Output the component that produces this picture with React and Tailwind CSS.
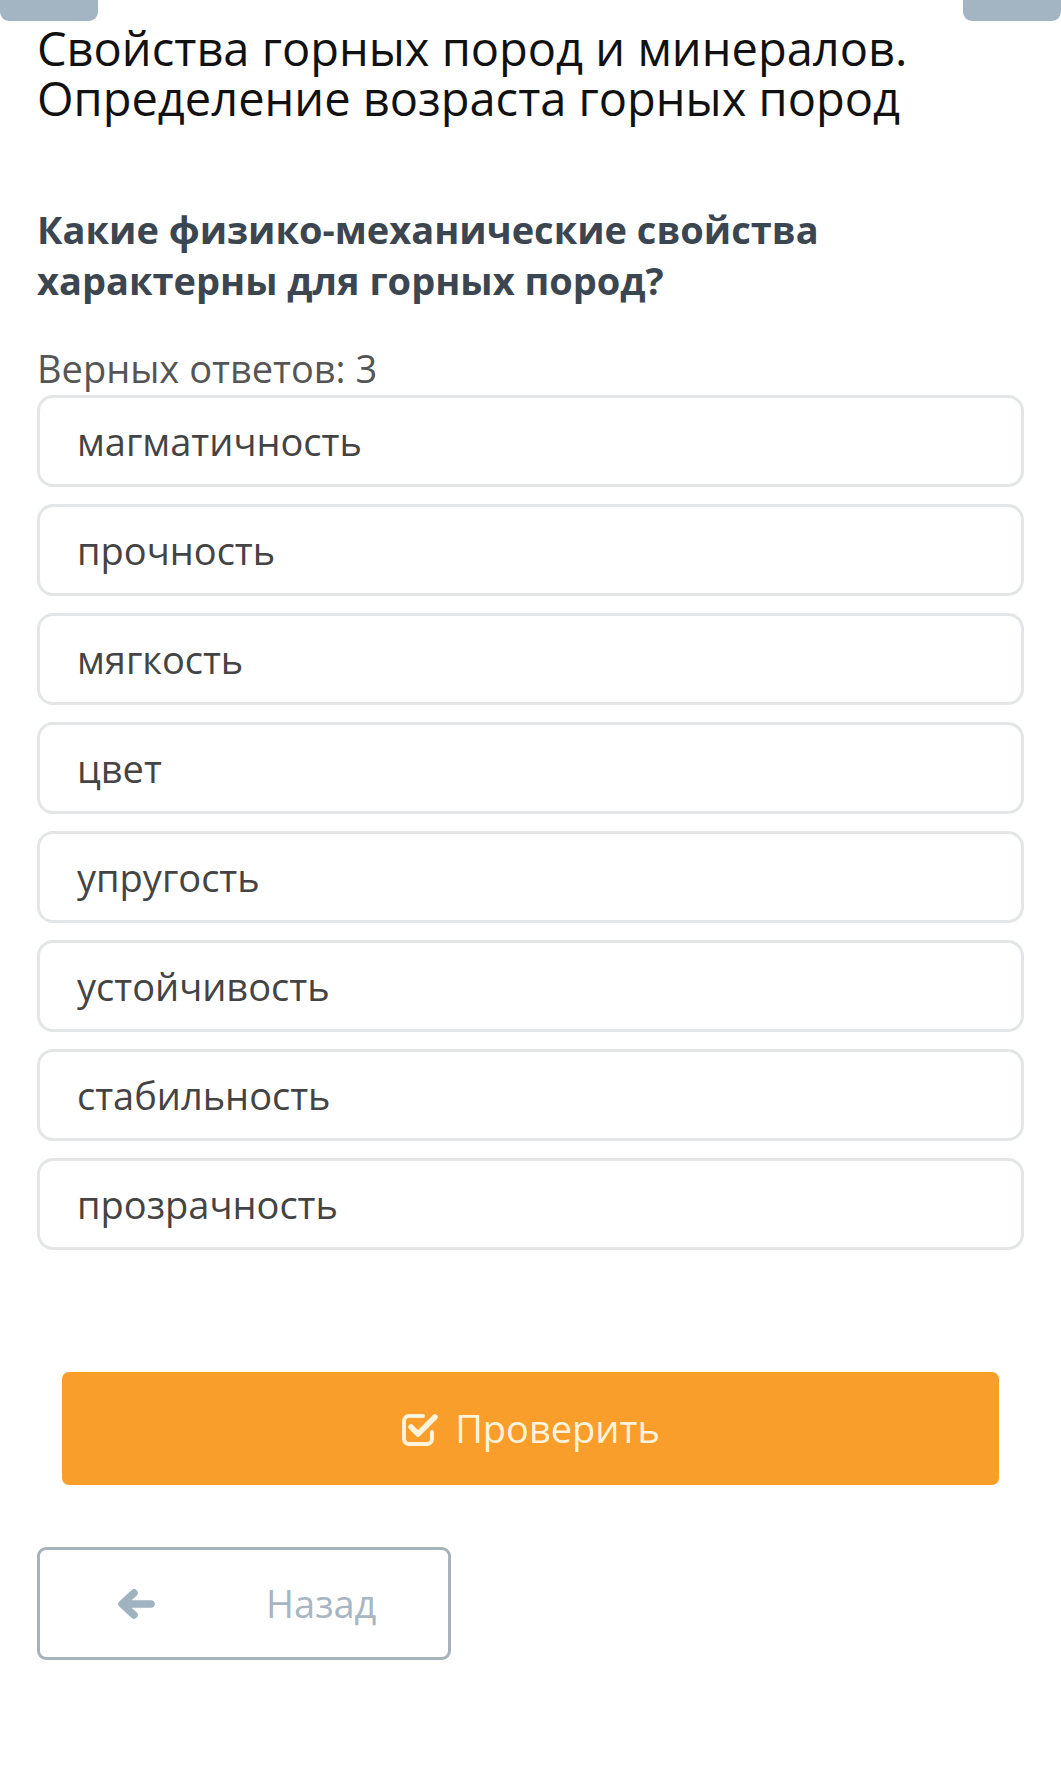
const options = [
  "магматичность",
  "прочность",
  "мягкость",
  "цвет",
  "упругость",
  "устойчивость",
  "стабильность",
  "прозрачность",
];

function CheckIcon() {
  return (
    <svg width="38" height="34" viewBox="0 0 38 34" fill="none">
      <path
        d="M22 4H8a5 5 0 0 0-5 5v18a5 5 0 0 0 5 5h18a5 5 0 0 0 5-5v-7"
        stroke="#fff3dc"
        strokeWidth="4"
        strokeLinecap="round"
      />
      <path
        d="M10 15l7 7L34 5"
        stroke="#fff3dc"
        strokeWidth="5.5"
        strokeLinecap="round"
        strokeLinejoin="round"
      />
    </svg>
  );
}

function ArrowLeft() {
  return (
    <svg width="38" height="30" viewBox="0 0 38 30" fill="none">
      <path
        d="M34 15H7M17 4L5 15l12 11"
        stroke="#a0b3c0"
        strokeWidth="7.5"
        strokeLinecap="round"
        strokeLinejoin="round"
      />
    </svg>
  );
}

export default function App() {
  return (
    <div className="relative min-h-[1784px] w-[1061px] bg-white font-['Open_Sans',sans-serif]">
      <div className="flex justify-between">
        <div className="h-[21px] w-[98px] rounded-b-[9px] bg-[#a3b5c2]" />
        <div className="h-[21px] w-[98px] rounded-b-[9px] bg-[#a3b5c2]" />
      </div>

      <div className="px-[37px]">
        <h1 className="mt-[2px] text-[47px] leading-[50px] text-[#111]">
          Свойства горных пород и минералов.
          <br />
          Определение возраста горных пород
        </h1>

        <h2 className="mt-[81px] text-[38px] font-bold leading-[51px] text-[#3c4650]">
          Какие физико-механические свойства
          <br />
          характерны для горных пород?
        </h2>

        <p className="mt-[38px] text-[38px] leading-[48px] text-[#555]">Верных ответов: 3</p>

        <div className="mt-[3px] flex flex-col gap-[17px]">
          {options.map((o) => (
            <div
              key={o}
              className="flex h-[92px] items-center rounded-[16px] border-[3px] border-[#e3e5e6] pl-[37px] text-[38px] text-[#444]"
            >
              {o}
            </div>
          ))}
        </div>

        <div className="mt-[122px] px-[25px]">
          <button className="flex h-[113px] w-full items-center justify-center gap-[16px] rounded-[7px] bg-[#f99d2b] text-[38px] text-[#fff3dc]">
            <CheckIcon />
            Проверить
          </button>
        </div>

        <button className="mt-[62px] flex h-[113px] w-[414px] items-center rounded-[9px] border-[3px] border-[#a6b3ba] text-[38px] text-[#a7b6c1]">
          <span className="ml-[77px] flex">
            <ArrowLeft />
          </span>
          <span className="ml-[111px]">Назад</span>
        </button>
      </div>
    </div>
  );
}
